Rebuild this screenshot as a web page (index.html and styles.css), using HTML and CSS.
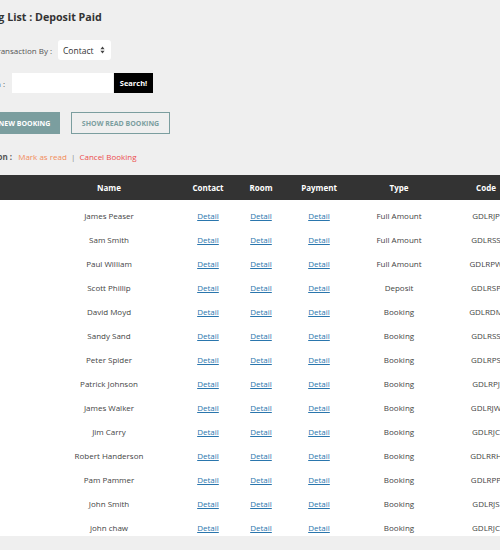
FILE: index.html
```html
<!DOCTYPE html>
<html lang="en">
<head>
  <meta charset="UTF-8">
  <meta name="viewport" content="width=device-width, initial-scale=1.0">
  <title>Booking List : Deposit Paid</title>
  <link rel="stylesheet" href="styles.css">
</head>
<body>
  <div class="page">
    <h2 class="title">Booking List : Deposit Paid</h2>

    <div class="form-row row-transaction">
      <label class="label">Transaction By :</label>
      <span class="select-wrap">
        <select class="select">
          <option>Contact</option>
          <option>Room</option>
          <option>Payment</option>
        </select>
        <svg class="select-arrow" width="5" height="8" viewBox="0 0 5 8">
          <path d="M2.5 0.5 L4.6 3.2 H0.4 Z M2.5 7.5 L4.6 4.8 H0.4 Z" fill="#444"/>
        </svg>
      </span>
    </div>

    <div class="form-row row-search">
      <label class="label">Search :</label>
      <input class="search-input" type="text">
      <button class="search-btn">Search!</button>
    </div>

    <div class="buttons">
      <button class="btn btn-new">New Booking</button>
      <button class="btn btn-show">Show Read Booking</button>
    </div>

    <div class="actions">
      <span class="label">Action :</span>
      <a class="mark">Mark as read</a>
      <span class="sep">|</span>
      <a class="cancel">Cancel Booking</a>
    </div>

    <table class="booking-table">
      <colgroup>
        <col class="c-no">
        <col class="c-name">
        <col class="c-contact">
        <col class="c-room">
        <col class="c-payment">
        <col class="c-type">
        <col class="c-code">
      </colgroup>
      <thead>
        <tr>
          <th>No</th>
          <th>Name</th>
          <th>Contact</th>
          <th>Room</th>
          <th>Payment</th>
          <th>Type</th>
          <th>Code</th>
        </tr>
      </thead>
      <tbody id="rows"></tbody>
    </table>
  </div>

  <script>
    const bookings = [
      ["James Peaser", "Full Amount", "GDLRJP"],
      ["Sam Smith", "Full Amount", "GDLRSS"],
      ["Paul William", "Full Amount", "GDLRPW"],
      ["Scott Phillip", "Deposit", "GDLRSP"],
      ["David Moyd", "Booking", "GDLRDM"],
      ["Sandy Sand", "Booking", "GDLRSS"],
      ["Peter Spider", "Booking", "GDLRPS"],
      ["Patrick Johnson", "Booking", "GDLRPJ"],
      ["James Walker", "Booking", "GDLRJW"],
      ["Jim Carry", "Booking", "GDLRJC"],
      ["Robert Handerson", "Booking", "GDLRRH"],
      ["Pam Pammer", "Booking", "GDLRPP"],
      ["John Smith", "Booking", "GDLRJS"],
      ["john chaw", "Booking", "GDLRJC"]
    ];

    const rows = document.getElementById('rows');

    bookings.forEach((b, i) => {
      const tr = document.createElement('tr');
      tr.innerHTML = `
        <td>${i + 1}</td>
        <td>${b[0]}</td>
        <td><a href="#">Detail</a></td>
        <td><a href="#">Detail</a></td>
        <td><a href="#">Detail</a></td>
        <td>${b[1]}</td>
        <td>${b[2]}</td>
      `;
      rows.appendChild(tr);
    });
  </script>
</body>
</html>
```

FILE: styles.css
```css
body {
  margin: 0;
  background: #efefef;
  font-family: "Open Sans", "Noto Sans", sans-serif;
  color: #444;
  overflow: hidden;
}

.page {
  margin-left: -45px;
  padding-top: 9px;
}

.title {
  margin: 0 0 0 6px;
  font-size: 10.7px;
  line-height: 16px;
  font-weight: bold;
  color: #333;
}

.form-row {
  display: flex;
  align-items: center;
  height: 20px;
}

.label {
  font-size: 8px;
  color: #555;
}

.row-transaction {
  margin-top: 15px;
  padding-left: 38px;
}

.row-transaction .label {
  width: 65px;
}

.select-wrap {
  position: relative;
  display: inline-block;
}

.select {
  appearance: none;
  -webkit-appearance: none;
  display: block;
  width: 53px;
  height: 20px;
  border: none;
  border-radius: 3px;
  background: #fff;
  font-family: inherit;
  font-size: 8.5px;
  color: #333;
  padding: 0 0 0 5px;
  margin: 0;
}

.select-arrow {
  position: absolute;
  right: 6px;
  top: 6px;
  pointer-events: none;
}

.row-search {
  margin-top: 13px;
}

.row-search .label {
  width: 50px;
  text-align: right;
  margin-right: 7px;
}

.search-input {
  width: 101px;
  height: 20px;
  box-sizing: border-box;
  border: none;
  background: #fff;
  margin: 0;
}

.search-btn {
  height: 20px;
  width: 39px;
  border: none;
  background: #000;
  color: #fff;
  font-family: inherit;
  font-size: 7.5px;
  font-weight: bold;
  padding: 0;
  margin-left: 1px;
}

.buttons {
  display: flex;
  gap: 11px;
  margin-top: 19px;
  padding-left: 34px;
}

.btn {
  height: 22px;
  box-sizing: border-box;
  font-family: inherit;
  font-size: 7px;
  font-weight: bold;
  text-transform: uppercase;
  padding: 0;
}

.btn-new {
  width: 71px;
  background: #7b9e9f;
  border: none;
  color: #fff;
}

.btn-show {
  width: 99px;
  background: transparent;
  border: 1px solid #7b9e9f;
  color: #7b9e9f;
}

.actions {
  margin-top: 17px;
  padding-left: 27px;
  font-size: 8px;
  line-height: 12px;
}

.actions .label {
  font-weight: bold;
  margin-right: 4px;
}

.mark {
  color: #f28b5a;
}

.sep {
  color: #888;
  margin: 0 2px;
}

.cancel {
  color: #ec4d4d;
}

.booking-table {
  margin-top: 12px;
  margin-left: -15px;
  width: 584px;
  table-layout: fixed;
  border-collapse: collapse;
  background: #fff;
  font-size: 8px;
}

.c-no { width: 96px; }
.c-name { width: 146px; }
.c-contact { width: 52px; }
.c-room { width: 54px; }
.c-payment { width: 62px; }
.c-type { width: 98px; }
.c-code { width: 76px; }

.booking-table th {
  background: #333;
  color: #fff;
  font-weight: bold;
  height: 25px;
  padding: 0;
  text-align: center;
}

.booking-table td {
  padding: 10px 0 2px;
  line-height: 12px;
  text-align: center;
  color: #444;
  white-space: nowrap;
  overflow: hidden;
}

.booking-table td a {
  color: #2a76ad;
  text-decoration: underline;
}
```
